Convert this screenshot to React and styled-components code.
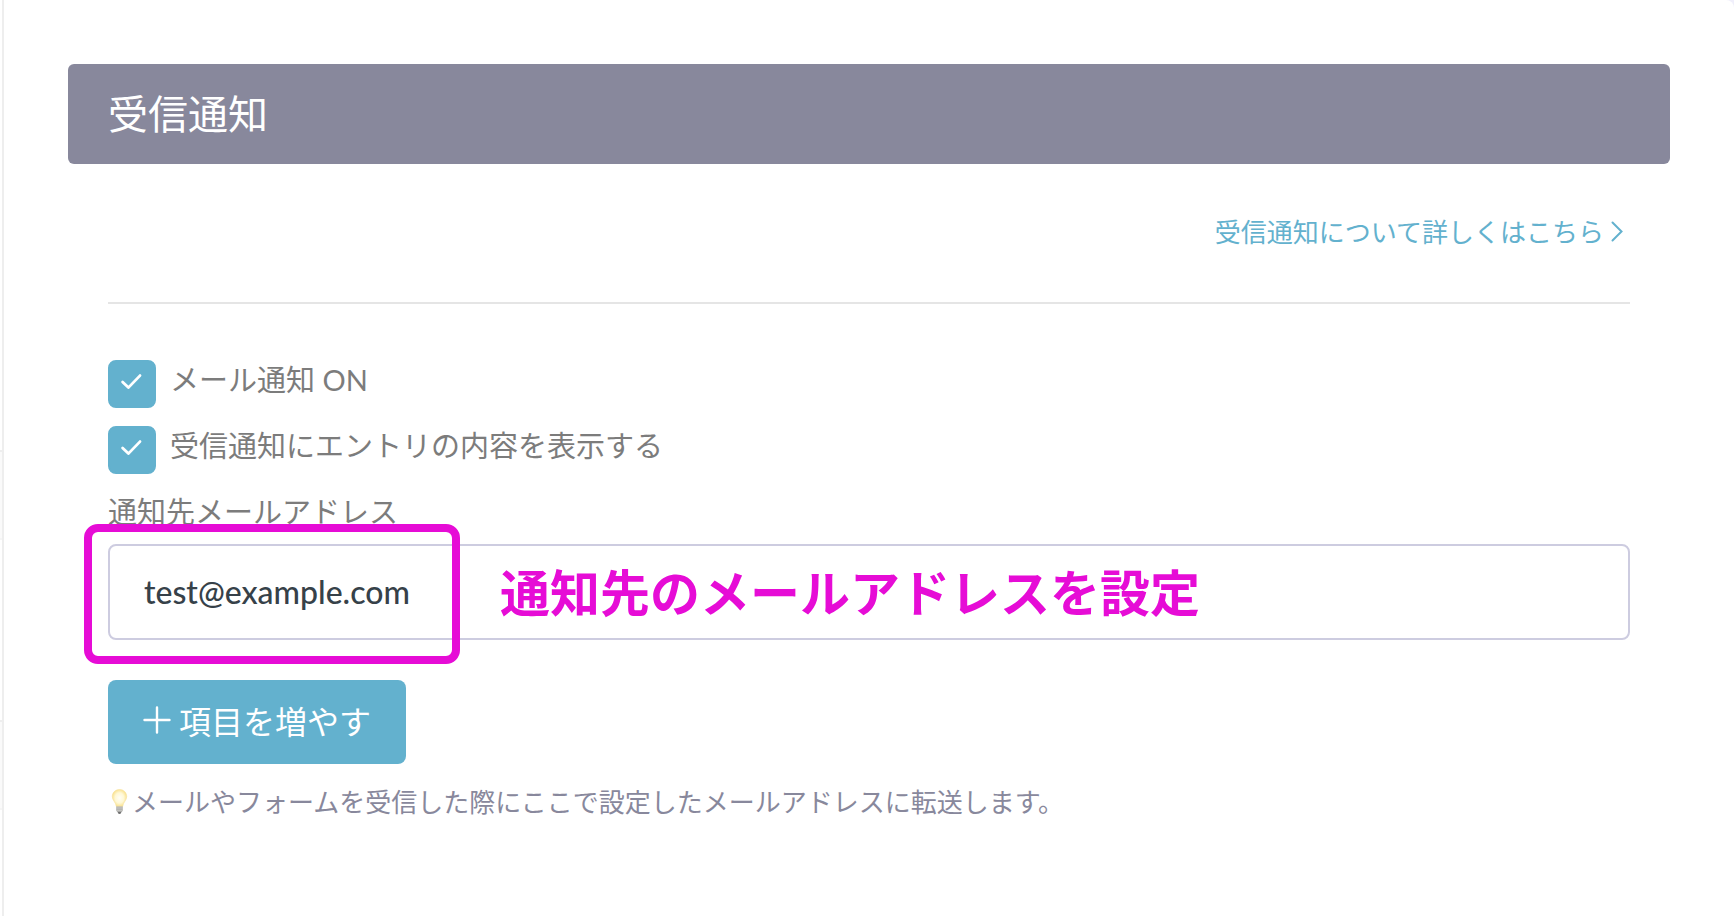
import React, { useState } from 'react'
import styled, { createGlobalStyle } from 'styled-components';

const GlobalStyle=createGlobalStyle`
  *{
    box-sizing:border-box;
  }
  body{
    margin:0;
    background:#f0effb;
    font-family:Lato, 'Noto Sans CJK JP', sans-serif;
    color:#7c7c7c;
  }
`;
const Page=styled.div`
  display:flex;
  min-height:100vh;
`;
const Side=styled.aside`
  display:flex;
  flex-direction:column;
  gap:180px;
  width:2px;
  flex:none;
  padding-top:450px;
  background:#ffffff;
`;
const SideItem=styled.div`
  height:90px;
  background:#fafafa;
  border-top:2px solid #eeeeee;
  border-bottom:2px solid #f5f5f5;
`;
const Main=styled.main`
  flex:1;
  min-width:0;
  padding:64px;
  background:#ffffff;
  border-left:2px solid #eeeeee;
  border-top-right-radius:8px;
`;
const Title=styled.h2`
  margin:0;
  padding:0 40px;
  border-radius:6px;
  background:#88889c;
  color:#ffffff;
  font-size:40px;
  font-weight:400;
  line-height:100px;
`;
const Body=styled.div`
  padding:48px 40px 0;
`;
const More=styled.div`
  display:flex;
  justify-content:flex-end;
  padding:0 6px 50px 0;
  border-bottom:2px solid #e5e5e5;
`;
const MoreLink=styled.a`
  display:flex;
  align-items:center;
  gap:6px;
  color:#63b1ce;
  font-size:26px;
  line-height:40px;
  text-decoration:none;
`;
const Form=styled.form`
  display:flex;
  flex-direction:column;
  align-items:flex-start;
  padding-top:56px;
`;
const CheckRow=styled.label`
  display:flex;
  gap:14px;
  height:48px;
  margin-bottom:18px;
  font-size:29px;
  line-height:40px;
`;
const Box=styled.span`
  display:grid;
  width:48px;
  height:48px;
  & > *{
    grid-area:1 / 1;
  }
  svg{
    margin:12px;
    pointer-events:none;
  }
`;
const Check=styled.input`
  appearance:none;
  width:48px;
  height:48px;
  margin:0;
  border:2px solid #63b1ce;
  border-radius:8px;
  background:#ffffff;
  &:checked{
    background:#63b1ce;
  }
`;
const FieldLabel=styled.label`
  margin-bottom:12px;
  font-size:29px;
  line-height:40px;
`;
const Field=styled.div`
  position:relative;
  width:100%;
  margin-bottom:40px;
`;
const TextInput=styled.input`
  display:block;
  width:100%;
  height:96px;
  padding:0 34px 2px;
  border:2px solid #cdcce0;
  border-radius:8px;
  background:#ffffff;
  color:#364149;
  font-family:inherit;
  font-size:32px;
  font-weight:500;
`;
const Marker=styled.div`
  position:absolute;
  top:-20px;
  left:-24px;
  width:376px;
  height:140px;
  border:8px solid #e60cd6;
  border-radius:14px;
  pointer-events:none;
`;
const Note=styled.strong`
  position:absolute;
  top:0;
  left:392px;
  color:#e60cd6;
  font-size:50px;
  font-weight:700;
  line-height:98px;
  white-space:nowrap;
  pointer-events:none;
`;
const AddButton=styled.button`
  display:flex;
  align-items:center;
  gap:8px;
  height:84px;
  padding:0 35px 4px;
  border:0;
  border-radius:8px;
  background:#63b1ce;
  color:#ffffff;
  font-family:inherit;
  font-size:32px;
`;
const Help=styled.p`
  display:flex;
  align-items:center;
  margin:18px 0 0;
  color:#88889c;
  font-size:26px;
  line-height:40px;
`;

const CheckIcon=()=>(
    <svg width="24" height="20" viewBox="0 0 24 20" fill="none" stroke="#ffffff" strokeWidth="2.8" strokeLinecap="round" strokeLinejoin="round">
        <path d="M2.6 10 8.4 15.6 20 3.6"/>
    </svg>
)
const ChevronIcon=()=>(
    <svg width="14" height="22" viewBox="0 0 14 22" fill="none" stroke="#63b1ce" strokeWidth="2" strokeLinecap="round">
        <path d="M2.5 1.5 11.5 10.5 2.5 19.5"/>
    </svg>
)
const PlusIcon=()=>(
    <svg width="28" height="28" viewBox="0 0 28 28" fill="none" stroke="#ffffff" strokeWidth="2.4" strokeLinecap="round">
        <path d="M14 1.5V26.5M1.5 14H26.5"/>
    </svg>
)
const BulbIcon=()=>(
    <svg width="24" height="28" viewBox="1 0 24 28">
        <defs>
            <radialGradient id="glow" cx="0.5" cy="0.5" r="0.55">
                <stop offset="0" stopColor="#fffef6"/>
                <stop offset="0.55" stopColor="#fff8d5"/>
                <stop offset="1" stopColor="#f8dd83"/>
            </radialGradient>
        </defs>
        <path d="M12.5 1.5c-4.2 0-7.2 3.1-7.2 7.1 0 3.8 3.4 5.4 4 9.8h6.4c.6-4.4 4-6 4-9.8 0-4-3-7.1-7.2-7.1z" fill="url(#glow)" stroke="#f7e199" strokeWidth="0.6"/>
        <path d="M9.2 18.4h6.6v4.4l-1.4 1.4h-3.8l-1.4-1.4z" fill="#a9a9a7"/>
        <path d="M9.2 20h6.6M9.2 22.2h6.6" stroke="#d9d9d5" strokeWidth="0.8"/>
        <path d="M10.6 24.2h3.8l-1 1.6h-1.8z" fill="#4a4a4a"/>
    </svg>
)

const App=()=>{
    const [notify,setNotify]=useState(true);
    const [showEntry,setShowEntry]=useState(true);
    const [email,setEmail]=useState('test@example.com');
    return(
        <>
        <GlobalStyle/>
        <Page>
            <Side>
                <SideItem/>
                <SideItem/>
            </Side>
            <Main>
                <Title>受信通知</Title>
                <Body>
                    <More>
                        <MoreLink href="#about">受信通知について詳しくはこちら<ChevronIcon/></MoreLink>
                    </More>
                    <Form onSubmit={(e)=>e.preventDefault()}>
                        <CheckRow>
                            <Box>
                                <Check type="checkbox" checked={notify} onChange={(e)=>setNotify(e.target.checked)}/>
                                <CheckIcon/>
                            </Box>
                            メール通知 ON
                        </CheckRow>
                        <CheckRow>
                            <Box>
                                <Check type="checkbox" checked={showEntry} onChange={(e)=>setShowEntry(e.target.checked)}/>
                                <CheckIcon/>
                            </Box>
                            受信通知にエントリの内容を表示する
                        </CheckRow>
                        <FieldLabel htmlFor="email">通知先メールアドレス</FieldLabel>
                        <Field>
                            <TextInput id="email" type="email" value={email} onChange={(e)=>setEmail(e.target.value)}/>
                            <Marker/>
                            <Note>通知先のメールアドレスを設定</Note>
                        </Field>
                        <AddButton type="button"><PlusIcon/>項目を増やす</AddButton>
                        <Help><BulbIcon/>メールやフォームを受信した際にここで設定したメールアドレスに転送します。</Help>
                    </Form>
                </Body>
            </Main>
        </Page>
        </>
    );
}
export default App
